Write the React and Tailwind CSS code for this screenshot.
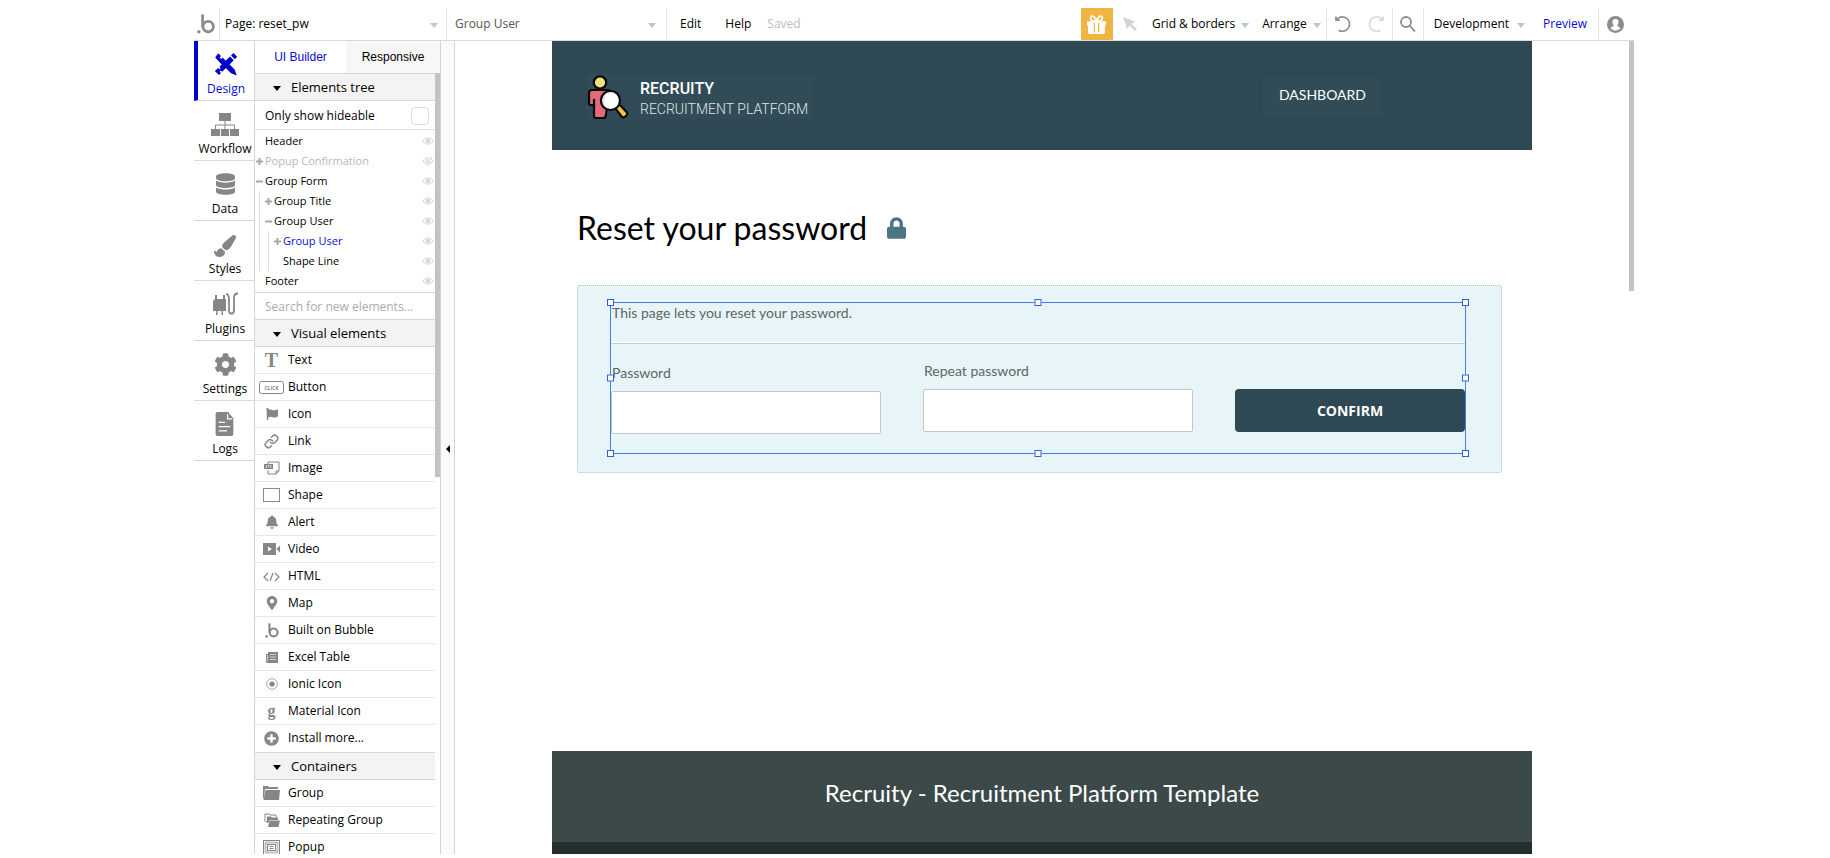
import React, { useState } from 'react'
import { FaDatabase, FaPaintBrush, FaCog, FaFlag, FaBell, FaMapMarkerAlt, FaPlusCircle, FaLock } from 'react-icons/fa'
import { Link } from 'lucide-react'

const Caret = () => (
  <span className="mt-0.5 h-0 w-0 shrink-0 border-x-4 border-t-5 border-x-transparent border-t-[#bcc6cf]" />
)

const BubbleLogo = ({ className }) => (
  <svg viewBox="0 0 18 20" className={className} fill="none" stroke="currentColor" strokeWidth="2.8">
    <circle cx="11.2" cy="12.6" r="5.2" />
    <path d="M5.6 0.4V13" />
    <circle cx="1.9" cy="17.8" r="1.7" fill="currentColor" stroke="none" />
  </svg>
)

const GiftIcon = () => (
  <svg viewBox="0 0 18 18" className="h-[19px] w-[19px]">
    <path d="M0 6h18v4h-1v6.5q0 1.5-1.5 1.5h-13Q1 18 1 16.5V10H0Z" fill="currentColor" />
    <path d="M7 7.5v9M11 7.5v9" stroke="#f0b443" strokeWidth="1.2" />
    <path d="M9 6C8 3 6.5 1 5 1S2.5 4 4.5 5 8 5.5 9 6c1-.5 2.5 0 4.5-1S14.5 1 13 1 10 3 9 6Z" fill="none" stroke="currentColor" strokeWidth="1.6" />
  </svg>
)

const AccountIcon = () => (
  <svg viewBox="0 0 17 17" className="h-[17px] w-[17px]">
    <circle cx="8.5" cy="8.5" r="8.5" fill="currentColor" />
    <path d="M8.5 3a3 3 0 0 1 3 3.2c0 1.5-.6 2.6-1.3 3.2 0 1.2 3 1.2 3.3 3.2a7 7 0 0 1-10 0c.3-2 3.3-2 3.3-3.2-.7-.6-1.3-1.7-1.3-3.2a3 3 0 0 1 3-3.2Z" fill="#fff" />
  </svg>
)

const DesignIcon = () => (
  <svg viewBox="0 0 24 24" className="h-6 w-6" fill="currentColor">
    <path d="M4.2 1.2 7 4 5.6 5.4l1.6 1.6L8.6 5.6l5.6 5.6-4 4L1.2 5.4Z" />
    <path d="m15.4 12.2 5.2 5.4L22.8 23.4l-5.8-2.2-5.4-5.4Z" />
    <path d="m19.4 1 3.8 3.8-2.4 2.4-3.8-3.8ZM16 4.4l3.8 3.8L8.2 19.8l-1.4-1.4-1.2 1.2 1.4 1.4-2 2L.8 19l3.4-3 1.4 1.2 1-1-1.2-1.4Z" />
  </svg>
)

const WorkflowIcon = () => (
  <svg viewBox="0 0 28 24" className="h-6 w-7" fill="currentColor">
    <path d="M8 1h12v8H8zM0 17h9v7H0zM10 17h8v7h-8zM19 17h9v7h-9z" />
    <path d="M14 9v8M4.5 17v-4h19v4" fill="none" stroke="currentColor" />
  </svg>
)

const PluginsIcon = () => (
  <svg viewBox="0 0 26 24" className="h-6 w-[26px]" fill="currentColor">
    <path d="M3 3h2v4h6V3h2v4h1v12h-3v4h-1.500v-4h-4v4H4v-4H1V9l2-2Z" />
    <path d="M17 6v12c0 5 5 5 5 0V6c0-3 1-4.5 4-4.500M17 7c0-3-1-5-3-5" fill="none" stroke="currentColor" strokeWidth="1.8" />
  </svg>
)

const LogsIcon = () => (
  <svg viewBox="0 0 18 23" className="h-6 w-5">
    <path d="M2 0h10l5 6v15a2 2 0 0 1-2 2H2a2 2 0 0 1-2-2V2a2 2 0 0 1 2-2Z" fill="currentColor" />
    <path d="M11.5 2v4.5H16M3 10h6M3 14h11M3 18h8" fill="none" stroke="#fff" strokeWidth="1.2" />
  </svg>
)

const ButtonIcon = () => (
  <svg viewBox="0 0 25 13" className="h-[13px] w-[25px]">
    <rect x="0.5" y="0.5" width="24" height="12" rx="2" fill="none" stroke="currentColor" />
    <text x="12.5" y="8.5" textAnchor="middle" fontSize="5" fontWeight="700" fontFamily="Open Sans, sans-serif" fill="currentColor">CLICK</text>
  </svg>
)

const ImageIcon = () => (
  <svg viewBox="0 0 16 15" className="h-[15px] w-4" fill="none" stroke="currentColor">
    <path d="M4 3V1h11v9l-3 3H4V9M15 10h-3v3" />
    <path d="M0 3h9v5H0z" fill="currentColor" stroke="none" />
    <path d="M1.5 6.5h1v-2M4 6.5v-2h1v1M7.5 4.5h-1v2h1" stroke="#fff" strokeWidth="0.6" />
  </svg>
)

const ShapeIcon = () => <span className="h-3.5 w-[17px] border border-[#8a8a8a]" />

const VideoIcon = () => (
  <svg viewBox="0 0 17 12" className="h-3 w-[17px]">
    <path d="M0 0h13v12H0zM13.5 6 17 2.5v7Z" fill="currentColor" />
    <path d="m5 3.5 4 2.5-4 2.5Z" fill="#fff" />
  </svg>
)

const HtmlIcon = () => (
  <svg viewBox="0 0 17 10" className="mt-0.5 h-2.5 w-[17px]" fill="none" stroke="currentColor" strokeWidth="1.2">
    <path d="M5 1 1 5l4 4M12 1l4 4-4 4M10 1 7 9" />
  </svg>
)

const ExcelIcon = () => (
  <svg viewBox="0 0 12 12" className="mt-0.5 h-3 w-3">
    <path d="M2 0h10v11H1.5A1.5 1.5 0 0 1 0 9.5V2h2Z" fill="currentColor" />
    <path d="M4 2.5h6M4 5h6M4 7.5h6M1.5 3v6" stroke="#ddd" strokeWidth="0.8" />
  </svg>
)

const IonicIcon = () => (
  <svg viewBox="0 0 12 12" className="h-3 w-3">
    <circle cx="6" cy="6" r="5.4" fill="none" stroke="currentColor" strokeWidth="0.7" />
    <circle cx="6" cy="6" r="2.6" fill="currentColor" />
  </svg>
)

const FolderIcon = () => (
  <svg viewBox="0 0 17 14" className="h-3.5 w-[17px]" fill="currentColor">
    <path d="M0 0h5l1 1h9v2H2L1 12H0Z" />
    <path d="M2.5 4H17L16 14H0.5Z" />
  </svg>
)

const RepeatingIcon = () => (
  <svg viewBox="0 0 16 14" className="h-3.5 w-4">
    <path d="M1 9V1h4l1 1h6v2M2 9h2" fill="none" stroke="currentColor" />
    <path d="M3 3.5h4l1 1h6V7H6l-2 3H3Z" fill="currentColor" />
    <path d="M5.5 7.5H16L14.5 14H4Z" fill="currentColor" />
  </svg>
)

const PopupIcon = () => (
  <svg viewBox="0 0 17 15" className="h-[15px] w-[17px]" fill="none" stroke="currentColor">
    <rect x="0.5" y="0.5" width="16" height="14" />
    <rect x="2.5" y="2.5" width="12" height="10" strokeWidth="2" strokeDasharray="1 1" />
    <rect x="4.5" y="4.5" width="8" height="6" />
    <path d="M6.5 6.5h4M6.5 8.5h4" />
  </svg>
)

const EyeIcon = ({ off }) => (
  <svg viewBox="0 0 12 8" className="h-2 w-3 text-[#d4d4d4]" fill="none" stroke="currentColor">
    <path d="M0.6 4Q6-2.5 11.4 4 6 10.5 0.6 4Z" />
    <circle cx="6" cy="4" r="1.8" fill="currentColor" />
    {off && <path d="M3.5 8 9 0" stroke="#fff" strokeWidth="1.5" />}
    {off && <path d="M4.5 8 9.5 0" />}
  </svg>
)

const SignIcon = ({ sign }) => (
  <svg viewBox="0 0 7 7" className="h-[7px] w-[7px] text-[#a8a8a8]" stroke="currentColor" strokeWidth="2">
    <path d={sign === '+' ? 'M0 3.5h7M3.5 0v7' : 'M0 3.5h7'} />
  </svg>
)

const RecruityLogo = () => (
  <svg viewBox="0 0 42 44" className="h-11 w-[42px]" stroke="#0b0b0b" strokeWidth="2.2">
    <circle cx="13" cy="7.5" r="6.2" fill="#f3e07c" />
    <path d="M2 28V18q0-3 3-3h17l-3 25q0 3-3 3H9q-2 0-2-2V30H4q-2 0-2-2Z" fill="#e0697a" strokeLinejoin="round" />
    <path d="M7 24v7" />
    <path d="m28 33 4-4 8 8.5q1 1.5-1 3.5t-4 1Z" fill="#f6c244" strokeLinejoin="round" />
    <circle cx="23.5" cy="25.5" r="9.5" fill="#fff" />
    <path d="M18 31.5a8 8 0 0 1 1-12.5q-3 6-1 12.5Z" fill="#dcdcdc" stroke="none" />
  </svg>
)

const NAV = [
  { label: 'Design', icon: <DesignIcon /> },
  { label: 'Workflow', icon: <WorkflowIcon /> },
  { label: 'Data', icon: <FaDatabase className="h-[22px] w-[19px]" /> },
  { label: 'Styles', icon: <FaPaintBrush className="mt-1 h-[22px] w-[22px]" /> },
  { label: 'Plugins', icon: <PluginsIcon /> },
  { label: 'Settings', icon: <FaCog className="h-[23px] w-[23px]" /> },
  { label: 'Logs', icon: <LogsIcon /> },
]

const TREE = [
  { label: 'Header' },
  { label: 'Popup Confirmation', sign: '+', hidden: true },
  { label: 'Group Form', sign: '-' },
  { label: 'Group Title', sign: '+', depth: 1 },
  { label: 'Group User', sign: '-', depth: 1 },
  { label: 'Group User', sign: '+', depth: 2, selected: true },
  { label: 'Shape Line', depth: 2 },
  { label: 'Footer' },
]

const VISUAL = [
  { label: 'Text', icon: <span className="font-['Liberation_Serif',serif] text-xl font-bold">T</span> },
  { label: 'Button', icon: <ButtonIcon /> },
  { label: 'Icon', icon: <FaFlag className="h-3 w-3.5" /> },
  { label: 'Link', icon: <Link className="h-[15px] w-[15px]" strokeWidth={2.4} /> },
  { label: 'Image', icon: <ImageIcon /> },
  { label: 'Shape', icon: <ShapeIcon /> },
  { label: 'Alert', icon: <FaBell className="h-3.5 w-3" /> },
  { label: 'Video', icon: <VideoIcon /> },
  { label: 'HTML', icon: <HtmlIcon /> },
  { label: 'Map', icon: <FaMapMarkerAlt className="h-3.5 w-3" /> },
  { label: 'Built on Bubble', icon: <BubbleLogo className="h-[15px] w-3.5" /> },
  { label: 'Excel Table', icon: <ExcelIcon /> },
  { label: 'Ionic Icon', icon: <IonicIcon /> },
  { label: 'Material Icon', icon: <span className="font-['Liberation_Serif',serif] text-base leading-4 font-bold">g</span> },
  { label: 'Install more...', icon: <FaPlusCircle className="h-[15px] w-[15px]" /> },
]

const CONTAINERS = [
  { label: 'Group', icon: <FolderIcon /> },
  { label: 'Repeating Group', icon: <RepeatingIcon /> },
  { label: 'Popup', icon: <PopupIcon /> },
]

const HANDLES = [
  '-left-1 -top-1',
  'left-1/2 -top-1 -translate-x-1/2',
  '-right-1 -top-1',
  '-left-1 top-1/2 -translate-y-1/2',
  '-right-1 top-1/2 -translate-y-1/2',
  '-left-1 -bottom-1',
  'left-1/2 -bottom-1 -translate-x-1/2',
  '-right-1 -bottom-1',
]

function Toolbar() {
  return (
    <header className="flex h-[33px] shrink-0 items-stretch border-b border-[#dadada] text-xs text-black">
      <a href="#home" aria-label="Home" className="flex w-[25px] items-center pl-[3px] text-[#8c8c8c]">
        <BubbleLogo className="h-5 w-[18px]" />
      </a>
      <button className="flex w-[227px] items-center justify-between border-l border-[#e4e4e4] pl-[5px] pr-2">
        Page: reset_pw
        <Caret />
      </button>
      <button className="flex w-[221px] items-center justify-between border-x border-[#e4e4e4] pl-2 pr-2.5 text-[#555]">
        Group User
        <Caret />
      </button>
      <nav className="flex items-center gap-6 pl-[13px]">
        <button>Edit</button>
        <button>Help</button>
        <span className="-ml-2 text-[#bdbdbd]">Saved</span>
      </nav>
      <div className="ml-auto flex items-stretch">
        <button aria-label="Gifts" className="flex w-8 items-center justify-center bg-[#f0b443] text-white">
          <GiftIcon />
        </button>
        <button aria-label="Select" className="flex w-[34px] items-center justify-center text-[#d4d4d4]">
          <svg viewBox="0 0 14 14" className="h-3.5 w-3.5" fill="currentColor">
            <path d="m0 0 12 4.5-3.5 2.5L14 12l-2 2-5.5-5.500L4 12Z" />
          </svg>
        </button>
        <button className="flex items-center gap-1.5 pl-[5px] pr-[13px]">
          Grid &amp; borders
          <Caret />
        </button>
        <button className="flex items-center gap-1.5 pr-[5px]">
          Arrange
          <Caret />
        </button>
        <div className="flex w-[66px] items-center justify-between border-l border-[#e4e4e4] pl-2 pr-2">
          <button aria-label="Undo" className="text-[#8c8c8c]">
            <svg viewBox="0 0 16 18" className="h-[18px] w-4" fill="none" stroke="currentColor" strokeWidth="1.6">
              <path d="M1.8 4.5A7.2 7.2 0 1 1 3.6 15.2M1 1.5v3.7h4" />
            </svg>
          </button>
          <button aria-label="Redo" className="text-[#d9d9d9]">
            <svg viewBox="0 0 16 18" className="h-[18px] w-4" fill="none" stroke="currentColor" strokeWidth="1.6">
              <path d="M14.2 4.5A7.2 7.2 0 1 0 12.4 15.2M15 1.5v3.7h-4" />
            </svg>
          </button>
        </div>
        <button aria-label="Search" className="flex w-8 items-center justify-center border-x border-[#e4e4e4] text-[#8c8c8c]">
          <svg viewBox="0 0 16 16" className="h-4 w-4" fill="none" stroke="currentColor" strokeWidth="1.8">
            <circle cx="6" cy="6" r="5" />
            <path d="m9.5 9.5 5.5 6" />
          </svg>
        </button>
        <button className="flex items-center gap-2 pl-2.5 pr-[18px]">
          Development
          <Caret />
        </button>
        <a href="#preview" className="flex items-center pr-[11px] text-[#0b0bd8]">Preview</a>
        <button aria-label="Account" className="flex w-9 items-center border-l border-[#e4e4e4] pl-2 text-[#8c8c8c]">
          <AccountIcon />
        </button>
      </div>
    </header>
  )
}

function SideNav() {
  return (
    <nav className="flex w-[61px] shrink-0 flex-col border-r border-[#d4d4d4]">
      {NAV.map(({ label, icon }) => (
        <button
          key={label}
          className={`flex h-[60px] shrink-0 flex-col items-center justify-end border-b border-[#d9d9d9] pb-px text-xs ${
            label === 'Design' ? 'border-l-4 border-l-[#0000cd] text-[#0b0bd8]' : 'pl-0.5 text-black'
          }`}
        >
          <span className={`flex h-6 items-center ${label === 'Design' ? 'text-[#0000cd]' : 'text-[#868686]'}`}>{icon}</span>
          <span className="mt-[3px] leading-5">{label}</span>
        </button>
      ))}
    </nav>
  )
}

function SectionHeader({ children }) {
  return (
    <button className="flex h-7 w-full shrink-0 items-center gap-2.5 border-y border-[#d6d6d6] bg-[#f3f3f3] pl-[18px] pt-0.5 text-[13px]">
      <span className="h-0 w-0 border-x-4 border-t-5 border-x-transparent border-t-black" />
      {children}
    </button>
  )
}

function TreeRow({ label, sign, depth = 0, hidden, selected }) {
  return (
    <li className="flex h-5 items-center pr-px text-[11px]">
      {Array.from({ length: depth }, (_, i) => (
        <span key={i} className="ml-1 h-full w-[5px] border-l border-[#dedede]" />
      ))}
      <span className="flex w-2.5 shrink-0 pl-px">{sign && <SignIcon sign={sign} />}</span>
      <span className={`flex-1 ${hidden ? 'text-[#b3b9be]' : selected ? 'text-[#0b0bd8]' : 'text-black'}`}>{label}</span>
      <EyeIcon off={hidden} />
    </li>
  )
}

function ElementList({ items }) {
  return (
    <ul className="shrink-0">
      {items.map(({ label, icon }) => (
        <li key={label} className="h-[27px] border-b border-[#e6e6e6] last:border-transparent">
          <button className="flex h-full w-full items-center gap-1 pl-1 text-xs">
            <span className="flex w-[25px] shrink-0 justify-center text-[#868686]">{icon}</span>
            {label}
          </button>
        </li>
      ))}
    </ul>
  )
}

function ElementsPanel() {
  const [search, setSearch] = useState('')

  return (
    <aside className="flex w-[186px] shrink-0 flex-col border-r border-[#d4d4d4]">
      <div className="flex h-8 shrink-0 font-['Liberation_Sans',sans-serif] text-xs">
        <button className="w-[91px] text-[#0b0bd8]">UI Builder</button>
        <button className="flex-1 bg-[#f7f7f7]">Responsive</button>
      </div>
      <div className="flex min-h-0 flex-1">
        <div className="flex min-w-0 flex-1 flex-col overflow-hidden">
          <SectionHeader>Elements tree</SectionHeader>
          <label className="flex h-[29px] shrink-0 items-center justify-between border-b border-[#e2e2e2] pl-2.5 pr-1.5 pt-px text-xs">
            Only show hideable
            <input type="checkbox" className="h-[18px] w-[18px] appearance-none rounded border border-[#dcdcdc]" />
          </label>
          <ul className="shrink-0 py-px">
            {TREE.map((node, i) => (
              <TreeRow key={i} {...node} />
            ))}
          </ul>
          <input
            aria-label="Search for new elements"
            placeholder="Search for new elements..."
            value={search}
            onChange={(e) => setSearch(e.target.value)}
            className="h-[27px] shrink-0 border-t border-[#d6d6d6] pl-2.5 text-xs outline-none placeholder:text-[#ababab]"
          />
          <SectionHeader>Visual elements</SectionHeader>
          <ElementList items={VISUAL} />
          <SectionHeader>Containers</SectionHeader>
          <ElementList items={CONTAINERS} />
        </div>
        <div className="w-[5px] shrink-0">
          <div className="h-[404px] bg-[#c3c3c3]" />
        </div>
      </div>
    </aside>
  )
}

function ResetForm() {
  return (
    <section className="rounded-xs border border-dotted border-[#b5bfc2] bg-[#e8f5f8] pb-[18px] pl-8 pr-[35px] pt-4">
      <form className="relative border border-[#3f80e0] pb-[19px]" onSubmit={(e) => e.preventDefault()}>
        <p className="px-px pb-[19px] text-sm">This page lets you reset your password.</p>
        <div className="h-0.5 border-b border-[#c3cbd3] bg-white" />
        <div className="flex items-start gap-[42px] pt-[17px]">
          <label className="flex w-[270px] flex-col gap-2 pt-0.5 text-sm">
            <span className="pl-px">Password</span>
            <input type="password" className="h-[43px] rounded-xs border border-[#c6c6c6] bg-white px-2 outline-none" />
          </label>
          <label className="flex w-[270px] flex-col gap-2 text-sm">
            <span className="pl-px">Repeat password</span>
            <input type="password" className="h-[43px] rounded-xs border border-[#c6c6c6] bg-white px-2 outline-none" />
          </label>
          <button className="mt-7 h-[43px] flex-1 rounded-sm bg-[#2e4953] font-['Open_Sans',sans-serif] text-sm font-bold text-white">
            CONFIRM
          </button>
        </div>
        {HANDLES.map((pos) => (
          <span key={pos} className={`absolute h-[7px] w-[7px] border border-[#2a5fe6] bg-white ${pos}`} />
        ))}
      </form>
    </section>
  )
}

function Canvas() {
  return (
    <main className="flex min-w-0 flex-1 font-['Lato',sans-serif] text-[#5f6567]">
      <div className="mx-auto flex w-full max-w-[980px] flex-col">
        <header className="flex h-[109px] shrink-0 items-center justify-between bg-[#2e4953] pt-[3px] text-white">
          <div className="ml-[35px] flex items-end gap-[11px] bg-[#314c56] pr-1.5 font-['Roboto',sans-serif]">
            <RecruityLogo />
            <div>
              <p className="text-base font-medium leading-5">RECRUITY</p>
              <p className="text-sm font-light leading-5 text-[#dfe5e7]">RECRUITMENT PLATFORM</p>
            </div>
          </div>
          <a href="#dashboard" className="mr-[150px] bg-[#314c56] px-4 pb-[11px] pt-[7px] text-sm">DASHBOARD</a>
        </header>
        <div className="pl-[25px] pr-[30px] pt-[58px]">
          <h1 className="mb-[37px] flex items-center gap-5 text-[32px] leading-10 text-black">
            Reset your password
            <FaLock className="h-[22px] w-[19px] text-[#4b7583]" />
          </h1>
          <ResetForm />
        </div>
        <footer className="mt-auto flex h-[103px] shrink-0 items-start justify-center border-b-12 border-[#242e2e] bg-[#3c4949] pt-[26px] text-2xl text-white">
          Recruity - Recruitment Platform Template
        </footer>
      </div>
      <div className="w-[5px] shrink-0">
        <div className="h-[250px] bg-[#c4c4c4]" />
      </div>
    </main>
  )
}

export default function App() {
  return (
    <div className="h-screen overflow-hidden bg-white pb-1 pt-2 font-['Open_Sans',sans-serif]">
      <div className="mx-auto flex h-full max-w-[1442px] flex-col pr-0.5">
        <Toolbar />
        <div className="flex min-h-0 flex-1">
          <SideNav />
          <ElementsPanel />
          <button aria-label="Collapse panel" className="flex w-3.5 shrink-0 items-center justify-end border-r border-[#d4d4d4] bg-[#fafafa] pr-1 pt-0.5">
            <span className="h-0 w-0 border-y-4 border-r-4 border-y-transparent border-r-black" />
          </button>
          <Canvas />
        </div>
      </div>
    </div>
  )
}
